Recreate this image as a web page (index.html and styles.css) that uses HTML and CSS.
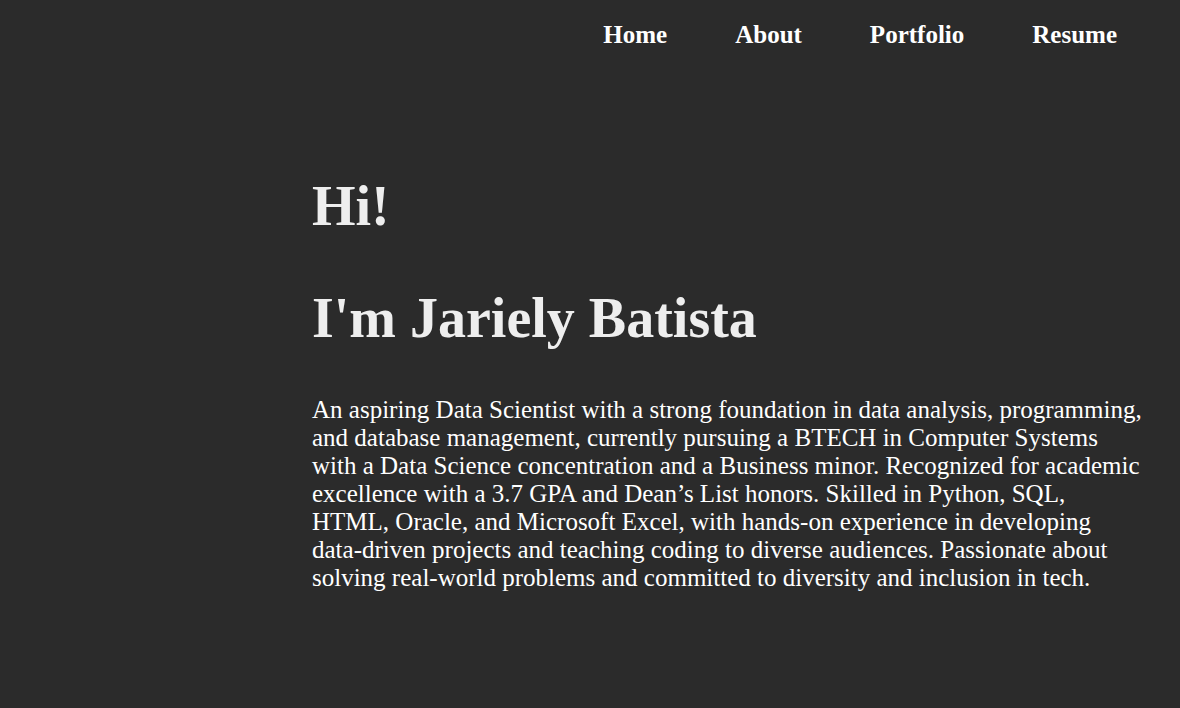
FILE: index.html
```html
<!DOCTYPE html>
<html>
<head>
<meta charset="utf-8">
<link rel="stylesheet" href="styles.css">
</head>
<body>
<nav class="nav">
  <a class="nav-link" href="#">Home</a>
  <a class="nav-link" href="#">About</a>
  <a class="nav-link" href="#">Portfolio</a>
  <a class="nav-link" href="#">Resume</a>
</nav>
<main class="hero">
  <h1 class="hero-title hero-title-first">Hi!</h1>
  <h1 class="hero-title">I'm Jariely Batista</h1>
  <p class="hero-text">An aspiring Data Scientist with a strong foundation in data analysis, programming, and database management, currently pursuing a BTECH in Computer Systems with a Data Science concentration and a Business minor. Recognized for academic excellence with a 3.7 GPA and Dean’s List honors. Skilled in Python, SQL, HTML, Oracle, and Microsoft Excel, with hands-on experience in developing data-driven projects and teaching coding to diverse audiences. Passionate about solving real-world problems and committed to diversity and inclusion in tech.</p>
</main>
</body>
</html>
```
FILE: styles.css
```css
html, body {
  margin: 0;
  padding: 0;
}
body {
  background: #2b2b2b;
  font-family: "Liberation Serif", "Times New Roman", serif;
  color: #eeeeee;
  height: 708px;
  overflow: hidden;
}
.nav {
  display: flex;
  justify-content: flex-end;
  gap: 68px;
  padding: 21px 63px 0 0;
}
.nav-link {
  color: #ffffff;
  text-decoration: none;
  font-weight: bold;
  font-size: 25px;
  line-height: 28px;
}
.hero {
  margin-left: 312px;
  margin-right: 35px;
  padding-top: 125px;
}
.hero-title {
  font-size: 56px;
  line-height: 64px;
  margin: 0 0 46px;
  color: #eeeeee;
}
.hero-title-first {
  margin-bottom: 48px;
}
.hero-text {
  font-size: 25px;
  line-height: 28px;
  color: #ffffff;
  margin: 0;
}
```
